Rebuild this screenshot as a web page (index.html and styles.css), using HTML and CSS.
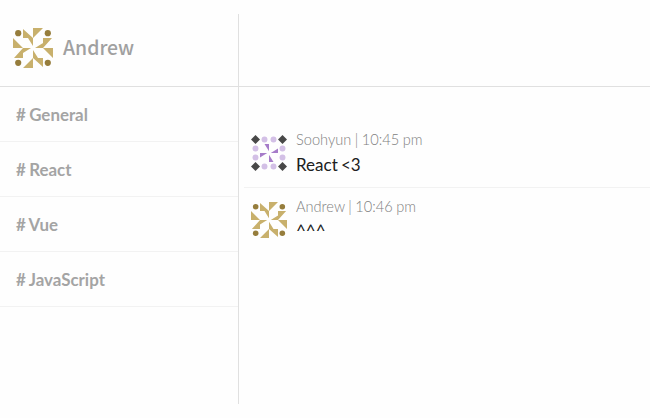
FILE: index.html
```html
<!DOCTYPE html>
<html lang="en">
<head>
<meta charset="utf-8">
<title>Chat</title>
<link rel="stylesheet" href="styles.css">
</head>
<body>
<svg class="defs" width="0" height="0" aria-hidden="true">
  <symbol id="gold" viewBox="0 0 40 40">
    <g id="gold-quarter">
      <circle cx="5.2" cy="5.2" r="3.1" fill="#967d3c"/>
      <path d="M10 1L20 10H10ZM20 0H30L20 10ZM15 10H20V18Z" fill="#c8b06c"/>
    </g>
    <use href="#gold-quarter" transform="rotate(90 20 20)"/>
    <use href="#gold-quarter" transform="rotate(180 20 20)"/>
    <use href="#gold-quarter" transform="rotate(270 20 20)"/>
  </symbol>
  <symbol id="purple" viewBox="0 0 40 40">
    <g id="purple-quarter">
      <path d="M5 0L10 5L5 10L0 5Z" fill="#484848"/>
      <circle cx="15" cy="5" r="3.3" fill="#d3c0e6"/>
      <circle cx="25" cy="5" r="3.3" fill="#d3c0e6"/>
      <path d="M15 10H20V18Z" fill="#a67cc9"/>
    </g>
    <use href="#purple-quarter" transform="rotate(90 20 20)"/>
    <use href="#purple-quarter" transform="rotate(180 20 20)"/>
    <use href="#purple-quarter" transform="rotate(270 20 20)"/>
  </symbol>
</svg>
<div class="app">
  <header class="top">
    <div class="user"><svg class="avatar-large"><use href="#gold"/></svg><span class="username">Andrew</span></div>
    <div class="heading"></div>
  </header>
  <div class="content">
    <nav class="channels">
      <div class="channel"># General</div>
      <div class="channel"># React</div>
      <div class="channel"># Vue</div>
      <div class="channel"># JavaScript</div>
    </nav>
    <main class="messages">
      <article class="message">
        <svg class="avatar"><use href="#purple"/></svg>
        <div><div class="meta">Soohyun | 10:45 pm</div><div class="text">React &lt;3</div></div>
      </article>
      <article class="message">
        <svg class="avatar"><use href="#gold"/></svg>
        <div><div class="meta">Andrew | 10:46 pm</div><div class="text carets">^^^</div></div>
      </article>
    </main>
  </div>
</div>
</body>
</html>
```
FILE: styles.css
```css
* { box-sizing: border-box; }
body { margin: 0; background: #fefefe; font-family: Lato, sans-serif; }
.defs { display: block; }
.app { display: flex; flex-direction: column; height: 404px; padding-top: 14px; }
.top { display: flex; height: 73px; border-bottom: 1px solid #e0e0e0; }
.user { display: flex; align-items: center; width: 239px; padding: 0 0 4px 13px; border-right: 1px solid #e0e0e0; }
.avatar-large { width: 40px; height: 40px; }
.username { margin: 0 0 2px 10px; font: 500 19.4px/24px "Noto Sans CJK KR", sans-serif; color: #a0a0a0; }
.content { display: flex; flex: 1; }
.channels { width: 239px; border-right: 1px solid #e0e0e0; }
.channel { height: 55px; padding-left: 16px; border-bottom: 1px solid #f2f2f2; font-size: 16.9px; font-weight: 700; line-height: 55px; word-spacing: -0.7px; color: #a4a4a4; }
.messages { flex: 1; padding: 34px 0 0 5px; }
.message { display: flex; height: 67px; padding: 8px 0 0 7px; border-bottom: 1px solid #f2f2f2; }
.message:last-child { border: 0; }
.avatar { width: 36px; height: 36px; margin: 6px 9px 0 0; }
.meta { font-size: 14.6px; font-weight: 300; line-height: 22px; word-spacing: -0.4px; color: #808080; }
.text { font-size: 17px; line-height: 27px; word-spacing: -1.2px; color: #202020; }
.carets { line-height: 25px; }
```
